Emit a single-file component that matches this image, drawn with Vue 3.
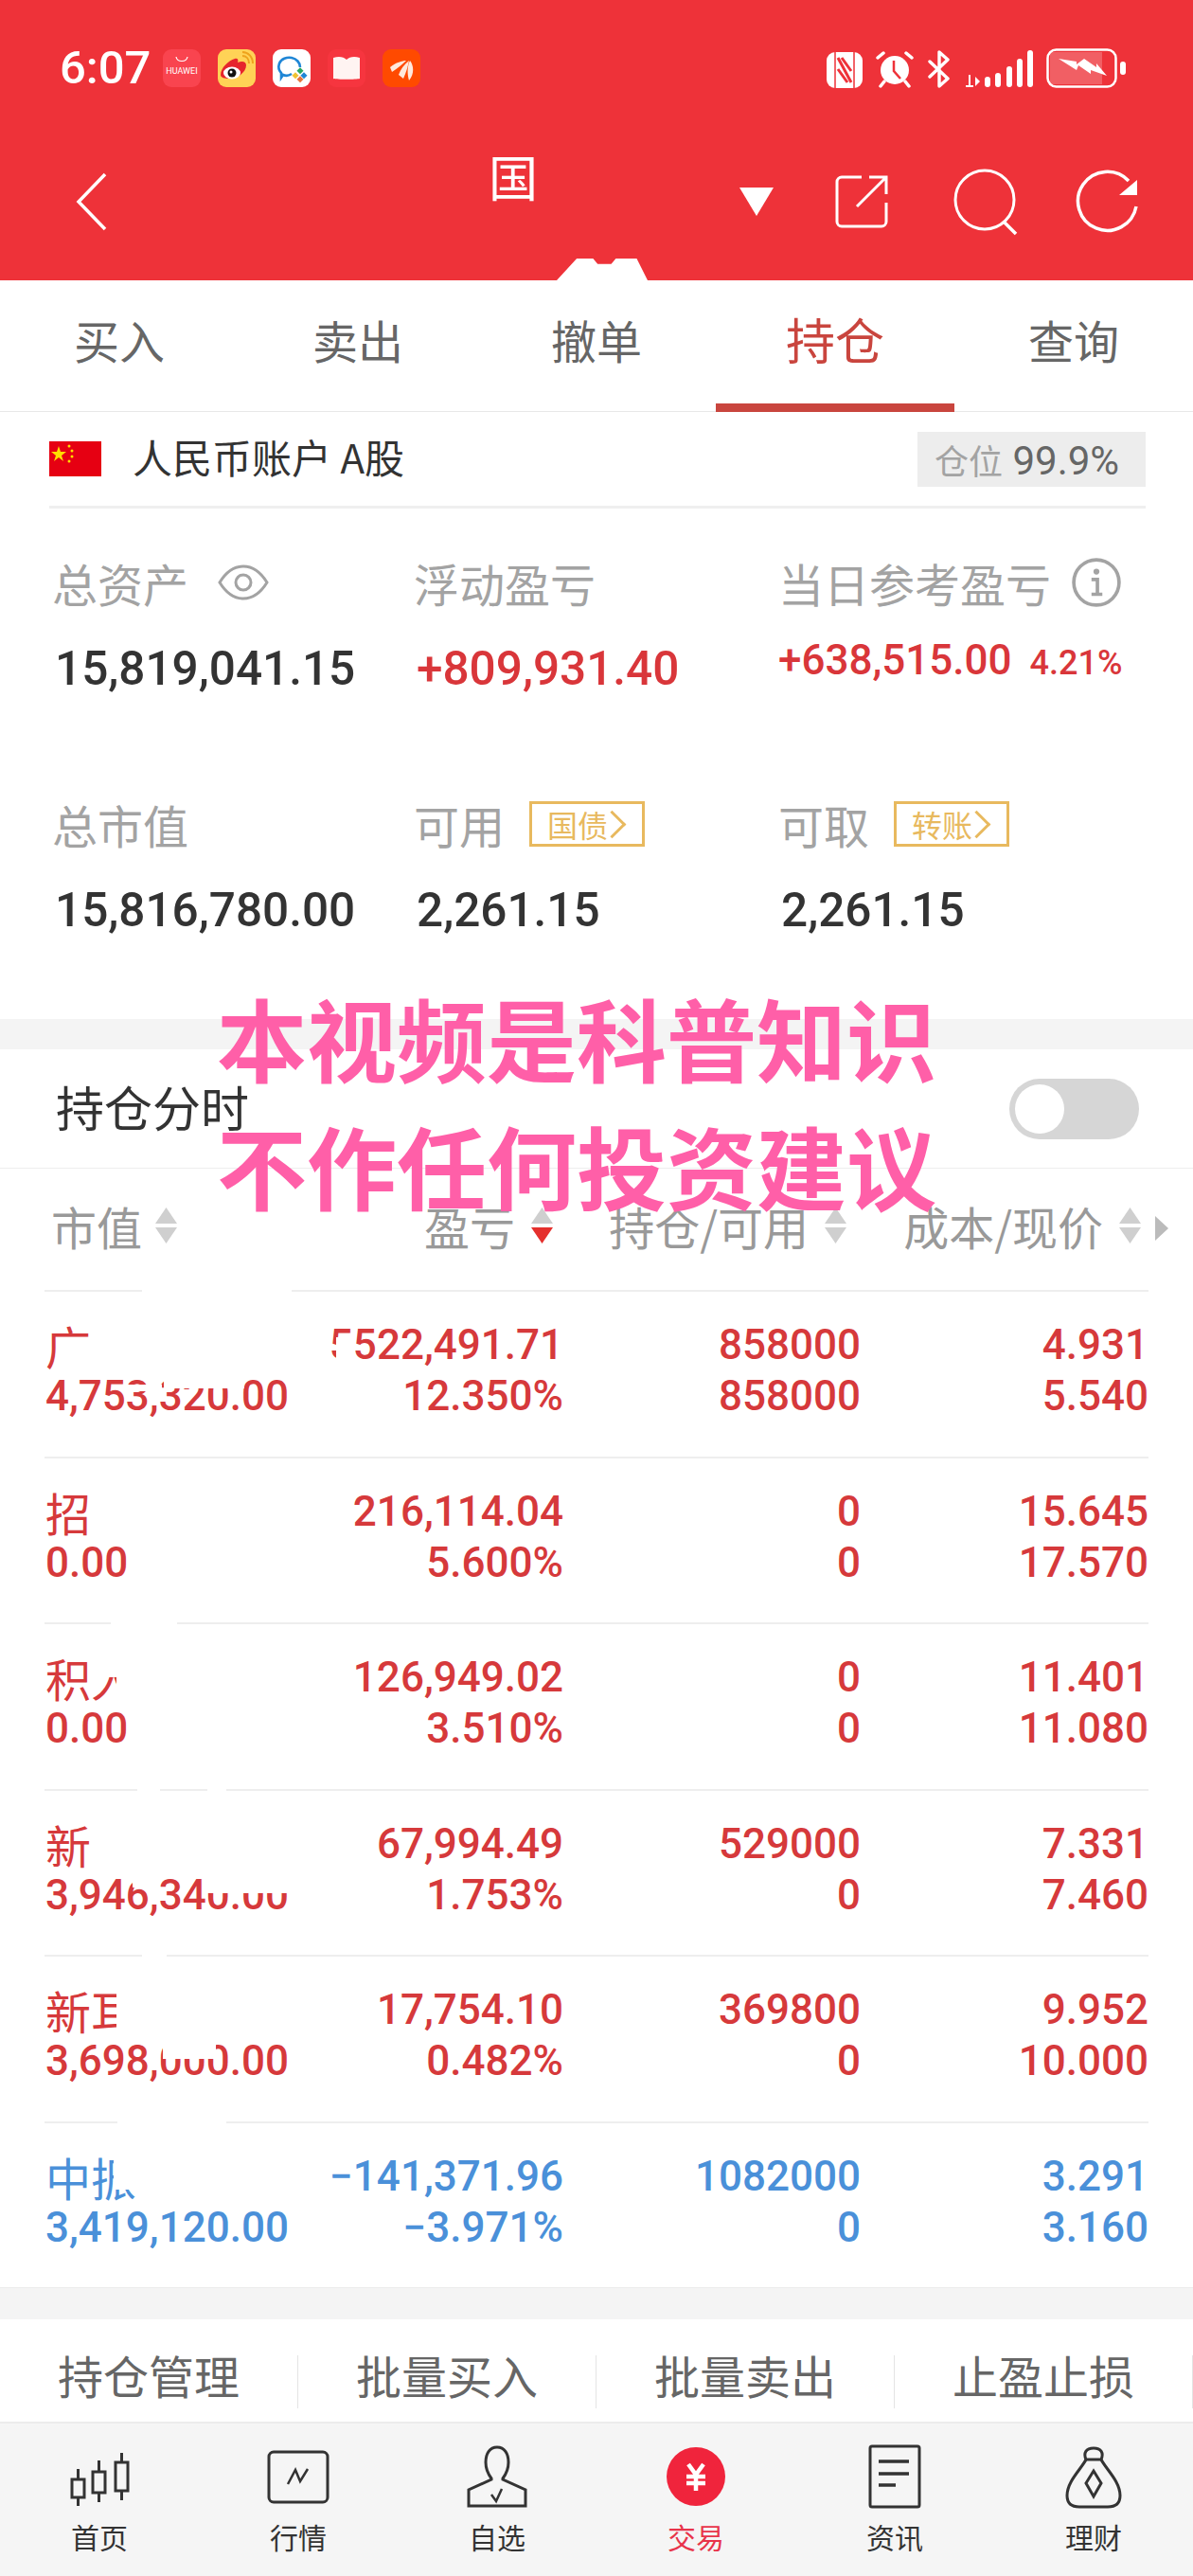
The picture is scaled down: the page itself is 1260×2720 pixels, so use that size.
<template>
  <div class="page">
    <header class="top">
      <div class="status">
        <span class="time">6:07</span>
        <div class="apps">
          <svg class="app" viewBox="0 0 40 40">
            <rect width="40" height="40" rx="9" fill="#f9444f"/>
            <path d="M14 8c1 6 11 6 12 0" fill="none" stroke="#fff" stroke-width="1.2"/>
            <text x="20" y="26" class="hw">HUAWEI</text>
          </svg>
          <svg class="app" viewBox="0 0 40 40">
            <rect width="40" height="40" rx="9" fill="#ffd256"/>
            <path d="M3 27c0-7 8-15 15-17 3-1 4 1 3 4 5-2 9-1 9 3 0 7-9 14-17 14-6 0-10-1-10-4z" fill="#e6252c"/>
            <ellipse cx="15" cy="25" rx="9" ry="6.5" fill="#fff"/>
            <circle cx="15" cy="25" r="4.5" fill="#111"/>
            <circle cx="14" cy="24" r="1.5" fill="#fff"/>
            <path d="M26 7c4 0 7 3 7 8M26 3c6 0 11 5 11 12" fill="none" stroke="#eea21c" stroke-width="2"/>
          </svg>
          <svg class="app" viewBox="0 0 40 40">
            <rect width="40" height="40" rx="9" fill="#fff"/>
            <path d="M20 26c-3 2-7 2-9 1l-2 3v-5c-3-3-3-7-2-10 2-5 8-7 13-6 5 1 9 5 9 10" fill="none" stroke="#1f86d6" stroke-width="2.6"/>
            <rect x="27" y="20" width="5" height="5" fill="#2aa860" transform="rotate(45 29 22)"/>
            <rect x="22" y="25" width="5" height="5" fill="#f1c232" transform="rotate(45 24 27)"/>
            <rect x="31" y="25" width="5" height="5" fill="#1f86d6" transform="rotate(45 33 27)"/>
            <rect x="27" y="29" width="5" height="5" fill="#e8743b" transform="rotate(45 29 31)"/>
          </svg>
          <svg class="app" viewBox="0 0 40 40">
            <rect width="40" height="40" rx="9" fill="#f6353f"/>
            <path d="M6 9c6-2 11-1 14 2 3-3 8-4 14-2v22c-4 1-24 1-28 0z" fill="#fff4f2"/>
          </svg>
          <svg class="app" viewBox="0 0 40 40">
            <rect width="40" height="40" rx="9" fill="#ff4a00"/>
            <path d="M8 19c6-5 13-7 17-7-4 4-9 8-15 12zM17 27c2-6 6-11 11-15-1 6-3 12-6 19zM28 33c-2-7-2-15 1-21 4 5 5 14-1 21z" fill="#ffe9dc"/>
          </svg>
        </div>
        <div class="sys">
          <svg width="38" height="38" viewBox="0 0 38 38">
            <rect width="38" height="38" rx="9" fill="#fff"/>
            <path d="M9 0v38M29 0v38" stroke="#ee3239" stroke-width="1.5"/>
            <path d="M12 6l14 26M12 18l10 14M16 6l10 14" stroke="#ee3239" stroke-width="3" fill="none"/>
          </svg>
          <svg width="40" height="40" viewBox="0 0 40 40">
            <circle cx="20" cy="21" r="15" fill="#fff"/>
            <path d="M19 11v11l7 8" fill="none" stroke="#ee3239" stroke-width="2.5"/>
            <path d="M2 8l6-5M38 8l-6-5M9 33l-4 5M31 33l4 5" stroke="#fff" stroke-width="3.5" stroke-linecap="round"/>
          </svg>
          <svg width="26" height="40" viewBox="0 0 26 40">
            <path d="M3 28L22 10 13 2v36l9-8L3 12" fill="none" stroke="#fff" stroke-width="3.4" stroke-linejoin="round" stroke-linecap="round"/>
          </svg>
          <svg width="72" height="40" viewBox="0 0 72 40">
            <path d="M5 26v12M1 38h8" stroke="#fff" stroke-width="2"/>
            <path d="M11 28l5 5-5 5z" fill="#fff"/>
            <rect x="21" y="28" width="6" height="11" rx="3" fill="#fff"/>
            <rect x="32" y="24" width="6" height="15" rx="3" fill="#fff"/>
            <rect x="44" y="17" width="6" height="22" rx="3" fill="#fff"/>
            <rect x="55" y="9" width="6" height="30" rx="3" fill="#fff"/>
            <rect x="66" y="0" width="6" height="39" rx="3" fill="#fff"/>
          </svg>
          <svg width="84" height="42" viewBox="0 0 84 42">
            <rect x="1.5" y="1.5" width="72" height="39" rx="9" fill="#ee3239" stroke="#fff" stroke-width="2.5"/>
            <path d="M4 4h55v34H4z" fill="#fff" opacity=".22"/>
            <path d="M13 11l19 3 0 3 8-6 13 9 0-4 11 13-17-6 0 4-13-9-2 5z" fill="#fff"/>
            <rect x="78" y="14" width="6" height="14" rx="3" fill="#fff"/>
          </svg>
        </div>
      </div>

      <div class="toolbar">
        <svg class="back" width="33" height="62" viewBox="0 0 33 62">
          <path d="M31 2L3 31l28 29" fill="none" stroke="#fff" stroke-width="3.5"/>
        </svg>
        <span class="title">国</span>
        <span class="caret"></span>
        <svg class="ext" width="58" height="58" viewBox="0 0 58 58">
          <path d="M29 3H8a5 5 0 0 0-5 5v42a5 5 0 0 0 5 5h42a5 5 0 0 0 5-5V30" fill="none" stroke="#fff" stroke-width="3"/>
          <path d="M24 34L55 3M37 3h18v18" fill="none" stroke="#fff" stroke-width="3"/>
        </svg>
        <svg class="search" width="72" height="72" viewBox="0 0 72 72">
          <circle cx="33" cy="33" r="31" fill="none" stroke="#fff" stroke-width="3"/>
          <path d="M53 56l13 13" stroke="#fff" stroke-width="3.5"/>
        </svg>
        <svg class="refresh" width="70" height="70" viewBox="0 0 70 70">
          <path d="M57 13A31 31 0 1 0 65 40" fill="none" stroke="#fff" stroke-width="3.5"/>
          <path d="M66 12v16H47z" fill="#fff"/>
        </svg>
      </div>
      <span class="blob"></span>
    </header>

    <nav class="tabs">
      <div v-for="t in tabs" :key="t" class="tab" :class="{ active: t === '持仓' }">{{ t }}</div>
    </nav>

    <div class="account">
      <svg width="55" height="37" viewBox="0 0 55 37">
        <rect width="55" height="37" fill="#e60012"/>
        <path d="M10 5l2 6h6l-5 4 2 6-5-4-5 4 2-6-5-4h6z" fill="#ffde00"/>
        <circle cx="21" cy="5" r="1.5" fill="#ffde00"/>
        <circle cx="24" cy="10" r="1.5" fill="#ffde00"/>
        <circle cx="24" cy="16" r="1.5" fill="#ffde00"/>
        <circle cx="21" cy="21" r="1.5" fill="#ffde00"/>
      </svg>
      <span class="acc-name">人民币账户 A股</span>
      <span class="chip"><b>仓位</b> 99.9%</span>
    </div>

    <section class="stats">
      <div class="stat">
        <div class="label">总资产
          <svg class="eye" width="54" height="40" viewBox="0 0 54 40">
            <path d="M2 20C10 7 18 3 27 3s17 4 25 17c-8 13-16 17-25 17S10 33 2 20z" fill="none" stroke="#a3a3a3" stroke-width="3"/>
            <circle cx="27" cy="20" r="8" fill="none" stroke="#a3a3a3" stroke-width="3"/>
          </svg>
        </div>
        <div class="value">15,819,041.15</div>
      </div>
      <div class="stat">
        <div class="label">浮动盈亏</div>
        <div class="value red">+809,931.40</div>
      </div>
      <div class="stat">
        <div class="label">当日参考盈亏
          <svg class="info" width="52" height="52" viewBox="0 0 50 50">
            <circle cx="25" cy="25" r="23" fill="none" stroke="#a3a3a3" stroke-width="3.5"/>
            <circle cx="25" cy="14" r="3" fill="#a3a3a3"/>
            <path d="M20 22h6v15M20 37h11" fill="none" stroke="#a3a3a3" stroke-width="3.5"/>
          </svg>
        </div>
        <div class="value small red">+638,515.00<em>4.21%</em></div>
      </div>
      <div class="stat">
        <div class="label">总市值</div>
        <div class="value">15,816,780.00</div>
      </div>
      <div class="stat">
        <div class="label">可用<span class="tag">国债<i></i></span></div>
        <div class="value">2,261.15</div>
      </div>
      <div class="stat">
        <div class="label">可取<span class="tag">转账<i></i></span></div>
        <div class="value">2,261.15</div>
      </div>
    </section>

    <div class="band"></div>

    <div class="switch-row">
      <span>持仓分时</span>
      <span class="toggle"><span class="knob"></span></span>
    </div>

    <div class="head">
      <div v-for="h in heads" :key="h.text" class="hcell">
        {{ h.text }}
        <svg width="23" height="42" viewBox="0 0 23 42">
          <path d="M11.5 2L23 19H0z" fill="#cfcfcf"/>
          <path d="M0 23h23L11.5 40z" :fill="h.active ? '#e5302d' : '#cfcfcf'"/>
        </svg>
      </div>
      <span class="more"></span>
    </div>

    <div class="rows">
      <div v-for="r in rows" :key="r.a2" class="row" :class="r.down ? 'blue' : 'redrow'">
        <div class="cell name">
          <span>{{ r.name }}</span>
          <span>{{ r.mv }}</span>
        </div>
        <div class="cell">
          <span>{{ r.a2 }}</span>
          <span>{{ r.a3 }}</span>
        </div>
        <div class="cell">
          <span>{{ r.b1 }}</span>
          <span>{{ r.b2 }}</span>
        </div>
        <div class="cell">
          <span>{{ r.c1 }}</span>
          <span>{{ r.c2 }}</span>
        </div>
        <span v-for="(p, i) in r.patches" :key="i" class="patch" :style="patchStyle(p)"></span>
      </div>
    </div>

    <div class="band thin"></div>

    <div class="actions">
      <div v-for="a in actions" :key="a" class="action"><span>{{ a }}</span></div>
    </div>

    <footer class="nav">
      <div class="nav-item">
        <svg width="70" height="70" viewBox="0 0 70 70" fill="none" stroke="#333" stroke-width="3">
          <rect x="6" y="38" width="13" height="19"/><path d="M12.500 27v11M12.500 57v9"/>
          <rect x="28" y="30" width="13" height="22"/><path d="M34.500 18v12M34.500 52v10"/>
          <rect x="52" y="20" width="13" height="30"/><path d="M58.500 10v10M58.500 50v10"/>
        </svg>
        <span>首页</span>
      </div>
      <div class="nav-item">
        <svg width="70" height="70" viewBox="0 0 70 70" fill="none" stroke="#333" stroke-width="3">
          <rect x="4" y="9" width="62" height="53" rx="5"/>
          <path d="M24 43l8-15 5 12 8-13" stroke-width="2.5"/>
        </svg>
        <span>行情</span>
      </div>
      <div class="nav-item">
        <svg width="70" height="70" viewBox="0 0 70 70" fill="none" stroke="#333" stroke-width="3">
          <path d="M35 4C27 4 23 11 23 20c0 8 3 13 6 17v1L5 49v17h60V49L41 38v-1c3-4 6-9 6-17 0-9-4-16-12-16z"/>
          <path d="M29 54l5 7 6-13" stroke-width="2.5"/>
        </svg>
        <span>自选</span>
      </div>
      <div class="nav-item on">
        <svg width="70" height="70" viewBox="0 0 70 70">
          <circle cx="35" cy="35" r="31" fill="#f0243c"/>
          <path d="M27 22l8 11 8-11M25 35h20M25 42h20M35 33v17" fill="none" stroke="#fff" stroke-width="4.500"/>
        </svg>
        <span>交易</span>
      </div>
      <div class="nav-item">
        <svg width="70" height="70" viewBox="0 0 70 70" fill="none" stroke="#333" stroke-width="3">
          <rect x="9" y="3" width="52" height="64" rx="2"/>
          <path d="M18 19h32M18 32h32M18 44h18" stroke-width="3.500"/>
        </svg>
        <span>资讯</span>
      </div>
      <div class="nav-item">
        <svg width="70" height="70" viewBox="0 0 70 70" fill="none" stroke="#333" stroke-width="3">
          <path d="M27 17C24 10 27 5 35 5s11 5 8 12z"/>
          <path d="M27 17C22 27 7 40 7 55c0 9 6 12 13 12h30c7 0 13-3 13-12 0-15-15-28-20-38"/>
          <path d="M35 29l8 13-8 14-8-14z"/>
        </svg>
        <span>理财</span>
      </div>
    </footer>

    <div class="notice">
      <p>本视频是科普知识</p>
      <p>不作任何投资建议</p>
    </div>
  </div>
</template>

<script setup>
const tabs = ['买入', '卖出', '撤单', '持仓', '查询']
const actions = ['持仓管理', '批量买入', '批量卖出', '止盈止损']
const heads = [
  { text: '市值' },
  { text: '盈亏', active: true },
  { text: '持仓/可用' },
  { text: '成本/现价' }
]

// patches: [x, y, w, h] relative to the row, the white smudges over the names
const rows = [
  { name: '广', mv: '4,753,320.00', a2: '5522,491.71', a3: '12.350%', b1: '858000', b2: '858000', c1: '4.931', c2: '5.540',
    patches: [[103, -2, 158, 5], [308, 48, 20, 40], [326, 76, 5, 20], [84, 98, 40, 7], [126, 92, 85, 10]] },
  { name: '招', mv: '0.00', a2: '216,114.04', a3: '5.600%', b1: '0', b2: '0', c1: '15.645', c2: '17.570', patches: [] },
  { name: '积人', mv: '0.00', a2: '126,949.02', a3: '3.510%', b1: '0', b2: '0', c1: '11.401', c2: '11.080',
    patches: [[70, -2, 70, 5], [50, 26, 40, 30], [76, 26, 30, 60]] },
  { name: '新', mv: '3,946,340.00', a2: '67,994.49', a3: '1.753%', b1: '529000', b2: '0', c1: '7.331', c2: '7.460',
    patches: [[98, -2, 24, 5], [172, -2, 20, 5], [171, 92, 92, 16], [93, 92, 26, 10]] },
  { name: '新耳', mv: '3,698,000.00', a2: '17,754.10', a3: '0.482%', b1: '369800', b2: '0', c1: '9.952', c2: '10.000',
    patches: [[103, -2, 26, 5], [76, 26, 30, 58], [125, 92, 56, 16]] },
  { name: '中振', mv: '3,419,120.00', a2: '−141,371.96', a3: '−3.971%', b1: '1082000', b2: '0', c1: '3.291', c2: '3.160', down: true,
    patches: [[77, -2, 115, 5], [73, 24, 30, 46]] }
]

const patchStyle = (p) => ({
  left: p[0] + 'px',
  top: p[1] + 'px',
  width: p[2] + 'px',
  height: p[3] + 'px'
})
</script>

<style scoped>
.page {
  position: relative;
  width: 1260px;
  height: 2720px;
  overflow: hidden;
  background: #fff;
  font-family: "Noto Sans CJK SC", "Noto Sans", sans-serif;
  color: #333;
}

.top {
  position: relative;
  height: 296px;
  background: #ee3239;
  color: #fff;
}

.status {
  display: flex;
  align-items: center;
  height: 42px;
  padding: 51px 0 0 63px;
}

.time {
  width: 109px;
  font-family: Roboto, sans-serif;
  font-size: 49px;
  font-weight: 500;
  line-height: 42px;
}

.apps {
  display: flex;
  gap: 18px;
}

.app {
  width: 40px;
  height: 40px;
}

.hw {
  font-family: Roboto, sans-serif;
  font-size: 9px;
  fill: #fff;
  text-anchor: middle;
}

.sys {
  display: flex;
  align-items: flex-end;
  gap: 14px;
  margin-left: 429px;
}

.toolbar {
  display: flex;
  align-items: center;
  height: 90px;
  margin-top: 75px;
  padding-left: 80px;
}

.back {
  flex: none;
}

.title {
  width: 54px;
  margin-left: 403px;
  margin-top: -54px;
  font-size: 52px;
  line-height: 60px;
}

.caret {
  width: 0;
  height: 0;
  margin-left: 211px;
  border-left: 18px solid transparent;
  border-right: 18px solid transparent;
  border-top: 30px solid #fff;
}

.ext {
  margin-left: 64px;
}

.search {
  margin-left: 68px;
  margin-top: 2px;
}

.refresh {
  margin-left: 56px;
}

.blob {
  position: absolute;
  left: 588px;
  top: 273px;
  width: 96px;
  height: 23px;
  background: #fff;
  clip-path: polygon(22% 0, 40% 0, 45% 25%, 60% 25%, 65% 0, 88% 0, 100% 100%, 0 100%);
}

.tabs {
  display: grid;
  grid-template-columns: repeat(5, 252px);
  height: 138px;
  border-bottom: 1px solid #e8e8e8;
}

.tab {
  display: flex;
  justify-content: center;
  align-items: center;
  height: 124px;
  font-size: 48px;
  color: #666;
}

.tab.active {
  box-sizing: border-box;
  height: 139px;
  padding-bottom: 7px;
  border-bottom: 9px solid #c9453e;
  font-size: 52px;
  color: #c9453e;
}

.account {
  display: flex;
  align-items: center;
  height: 99px;
  margin: 0 50px 0 52px;
  border-bottom: 3px solid #efefef;
}

.acc-name {
  margin: 0 0 6px 33px;
  font-size: 42px;
  line-height: 60px;
  color: #333;
}

.chip {
  box-sizing: border-box;
  width: 241px;
  height: 58px;
  margin-left: auto;
  padding-left: 18px;
  line-height: 58px;
  background: #ededed;
  font-family: Roboto, "Noto Sans CJK SC", sans-serif;
  font-size: 42px;
  color: #666;
  white-space: nowrap;
}

.chip b {
  font-family: "Noto Sans CJK SC", sans-serif;
  font-size: 36px;
  font-weight: 400;
  color: #a3a3a3;
}

.stats {
  display: grid;
  grid-template-columns: 382px 385px 1fr;
  grid-auto-rows: 255px;
  height: 491px;
  padding: 48px 0 0 55px;
}

.label {
  display: flex;
  align-items: center;
  height: 60px;
  font-size: 48px;
  color: #a3a3a3;
  white-space: nowrap;
}

.value {
  margin-top: 31px;
  margin-left: 3px;
  height: 60px;
  font-family: Roboto, sans-serif;
  font-size: 49.5px;
  font-weight: 500;
  line-height: 60px;
  color: #333;
  white-space: nowrap;
}

.value.red {
  color: #d9363a;
}

.value.small {
  margin-top: 22px;
  margin-left: 0;
  font-size: 44px;
}

.value em {
  margin-left: 19px;
  font-style: normal;
  font-size: 36px;
}

.eye {
  margin-left: 31px;
}

.info {
  margin-left: 22px;
}

.tag {
  display: inline-flex;
  align-items: center;
  box-sizing: border-box;
  width: 122px;
  height: 48px;
  margin-left: 26px;
  padding-left: 16px;
  border: 3px solid #e8b95e;
  font-size: 32px;
  color: #e8b95e;
}

.tag i {
  width: 18px;
  height: 18px;
  margin-left: -6px;
  border-top: 3px solid #e8b95e;
  border-right: 3px solid #e8b95e;
  transform: rotate(45deg);
}

.band {
  height: 32px;
  background: #f4f4f4;
}

.band.thin {
  height: 34px;
  border-top: 1px solid #ececec;
  box-sizing: border-box;
}

.switch-row {
  display: flex;
  justify-content: space-between;
  align-items: center;
  box-sizing: border-box;
  height: 126px;
  padding: 0 57px 0 59px;
  border-bottom: 1px solid #eee;
  font-size: 51px;
}

.switch-row > span:first-child {
  margin-bottom: 6px;
}

.toggle {
  display: flex;
  align-items: center;
  box-sizing: border-box;
  width: 137px;
  height: 64px;
  padding: 0 6px;
  border-radius: 32px;
  background: #d6d6d6;
}

.knob {
  width: 52px;
  height: 52px;
  border-radius: 50%;
  background: #fff;
}

.head {
  position: relative;
  display: grid;
  grid-template-columns: 228px 302px 310px 311px;
  align-items: center;
  box-sizing: border-box;
  height: 128px;
  padding-left: 54px;
  font-size: 48px;
  color: #999;
}

.hcell {
  display: flex;
  justify-content: flex-end;
  align-items: center;
  gap: 17px;
  margin-top: -8px;
  white-space: nowrap;
}

.hcell:first-child {
  justify-content: flex-start;
  gap: 14px;
}

.more {
  position: absolute;
  left: 1220px;
  top: 50px;
  border-left: 14px solid #bbb;
  border-top: 13px solid transparent;
  border-bottom: 13px solid transparent;
}

.row {
  position: relative;
  display: grid;
  grid-template-columns: 226px 321px 314px 304px;
  box-sizing: border-box;
  height: 175.500px;
  margin: 0 47px;
  padding: 29px 0 0 1px;
  border-top: 2px solid #eeeeee;
  font-family: Roboto, "Noto Sans CJK SC", sans-serif;
  font-size: 44px;
  font-weight: 500;
  line-height: 54px;
}

.redrow {
  color: #d6393b;
}

.blue {
  color: #4a90d9;
}

.cell {
  display: flex;
  flex-direction: column;
  align-items: flex-end;
  white-space: nowrap;
}

.cell.name {
  align-items: flex-start;
}

.cell.name span:first-child {
  font-family: "Noto Sans CJK SC", sans-serif;
  font-size: 48px;
  font-weight: 400;
}

.patch {
  position: absolute;
  background: #fff;
}

.actions {
  display: grid;
  grid-template-columns: repeat(4, 315px);
  box-sizing: border-box;
  height: 108px;
  padding-top: 38px;
  background: #fff;
}

.action {
  display: flex;
  justify-content: center;
  align-items: center;
  height: 56px;
  border-right: 1px solid #e4e4e4;
  font-size: 48px;
  color: #666;
}

.action span {
  margin-bottom: 16px;
}

.nav {
  display: grid;
  grid-template-columns: repeat(6, 210px);
  box-sizing: border-box;
  height: 163px;
  padding-top: 21px;
  border-top: 2px solid #ececec;
  background: #f5f5f5;
}

.nav-item {
  display: flex;
  flex-direction: column;
  align-items: center;
  font-size: 30px;
  color: #333;
}

.nav-item span {
  margin-top: 8px;
  line-height: 40px;
}

.nav-item.on span {
  color: #e8344a;
}

.notice {
  position: absolute;
  left: 229px;
  top: 1027px;
  font-size: 95px;
  font-weight: 700;
  line-height: 135px;
  color: #ff5fa8;
}

.notice p {
  margin: 0;
  white-space: nowrap;
}
</style>

<style>
body {
  margin: 0;
  background: #fff;
}
</style>
